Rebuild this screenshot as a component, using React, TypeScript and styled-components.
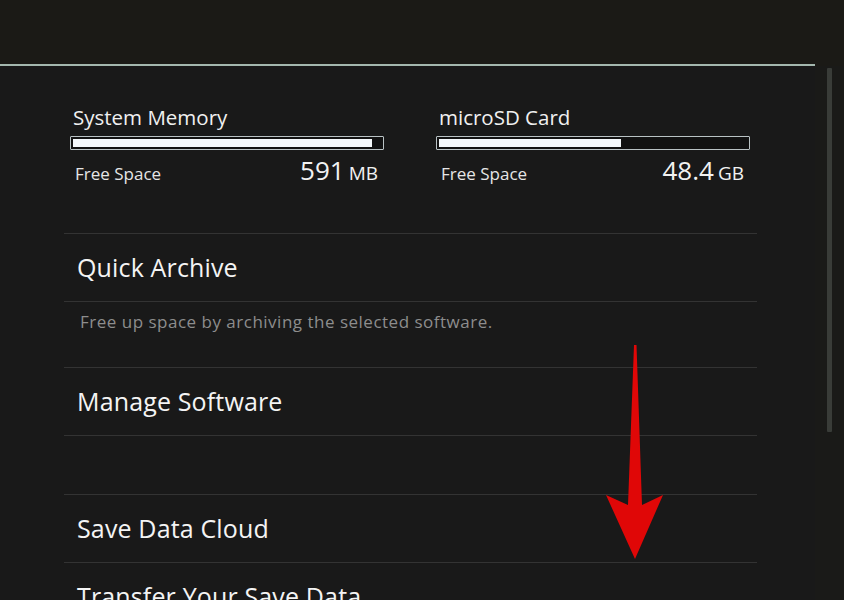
import React from 'react'
import styled, { createGlobalStyle } from 'styled-components'

const Global = createGlobalStyle`
  html, body { margin: 0; padding: 0; background: #1b1a16; overflow: hidden; }
  body { font-family: "Open Sans", "DejaVu Sans", sans-serif; }
`

const storage = [
  { name: 'System Memory', fill: 97, value: '591', unit: 'MB' },
  { name: 'microSD Card', fill: 59, value: '48.4', unit: 'GB' },
]

const rows = [
  { title: 'Quick Archive', note: 'Free up space by archiving the selected software.', noteHeight: 66 },
  { title: 'Manage Software', note: '', noteHeight: 59 },
  { title: 'Save Data Cloud' },
  { title: 'Transfer Your Save Data' },
]

const App = () => {
  return (
    <Screen>
      <Global />
      <Header />
      <Body>
        <Content>
          <StorageRow>
            {storage.map((s) => (
              <Storage key={s.name}>
                <StorageName>{s.name}</StorageName>
                <Bar>
                  <BarFill style={{ width: `${s.fill}%` }} />
                </Bar>
                <FreeRow>
                  <FreeLabel>Free Space</FreeLabel>
                  <FreeValue>
                    {s.value}
                    <Unit>{s.unit}</Unit>
                  </FreeValue>
                </FreeRow>
              </Storage>
            ))}
          </StorageRow>
          <List>
            {rows.map((r) => (
              <React.Fragment key={r.title}>
                <Item>{r.title}</Item>
                {r.note !== undefined && <Note $h={r.noteHeight}>{r.note}</Note>}
              </React.Fragment>
            ))}
          </List>
        </Content>
        <Gutter>
          <ScrollBar />
        </Gutter>
      </Body>
      <Arrow viewBox="0 0 844 600" width="844" height="600">
        <polygon
          points="634,345 636.5,345 642,505 663,495 635,559 606,495 628,505"
          fill="#e00707"
        />
      </Arrow>
    </Screen>
  )
}

export default App

const Screen = styled.div`
  position: relative;
  width: 844px;
  height: 600px;
  overflow: hidden;
  background: #1b1a16;
  color: #f2f2f2;
`
const Header = styled.div`
  width: 815px;
  border-bottom: 2px solid #a4b7ae;
  box-sizing: border-box;
  height: 66px;
`
const Body = styled.div`
  display: flex;
  height: 534px;
`
const Content = styled.div`
  width: 815px;
  background: #191919;
  padding: 0 0 0 64px;
  box-sizing: border-box;
`
const Gutter = styled.div`
  flex: 1;
  background: #1a1a18;
  padding: 2px 0 0 12px;
`
const ScrollBar = styled.div`
  width: 5px;
  height: 364px;
  background: #393c38;
  border-radius: 1px;
`
const StorageRow = styled.div`
  display: flex;
  gap: 52px;
  padding: 38px 0 0 6px;
  height: 168px;
  box-sizing: border-box;
  width: 693px;
  border-bottom: 1px solid #333;
`
const Storage = styled.div`
  width: 314px;
  display: flex;
  flex-direction: column;
`
const StorageName = styled.div`
  font-size: 20.5px;
  line-height: 26px;
  padding-left: 3px;
  color: #f0f0f0;
`
const Bar = styled.div`
  margin-top: 6px;
  height: 14px;
  border: 1.5px solid #b9c2c4;
  border-radius: 1px;
  padding: 2px;
  box-sizing: border-box;
  background: #121212;
`
const BarFill = styled.div`
  height: 100%;
  background: #f4f8fb;
`
const FreeRow = styled.div`
  display: flex;
  justify-content: space-between;
  align-items: baseline;
  padding: 4px 6px 0 5px;
`
const FreeLabel = styled.div`
  font-size: 17px;
  color: #e6e6e6;
`
const FreeValue = styled.div`
  font-size: 26px;
  line-height: 32px;
  color: #f2f2f2;
`
const Unit = styled.span`
  font-size: 19px;
  margin-left: 4px;
`
const List = styled.div`
  width: 693px;
`
const Item = styled.div`
  height: 68px;
  box-sizing: border-box;
  border-bottom: 1px solid #333;
  display: flex;
  align-items: center;
  padding: 0 0 2px 13px;
  font-size: 25px;
  letter-spacing: 0.15px;
  color: #f4f4f4;
`
const Note = styled.div<{ $h?: number }>`
  height: ${(p) => p.$h ?? 66}px;
  box-sizing: border-box;
  border-bottom: 1px solid #333;
  padding: 8px 0 0 16px;
  font-size: 17px;
  letter-spacing: 0.5px;
  color: #8d8d8d;
`
const Arrow = styled.svg`
  position: absolute;
  left: 0;
  top: 0;
  pointer-events: none;
`
